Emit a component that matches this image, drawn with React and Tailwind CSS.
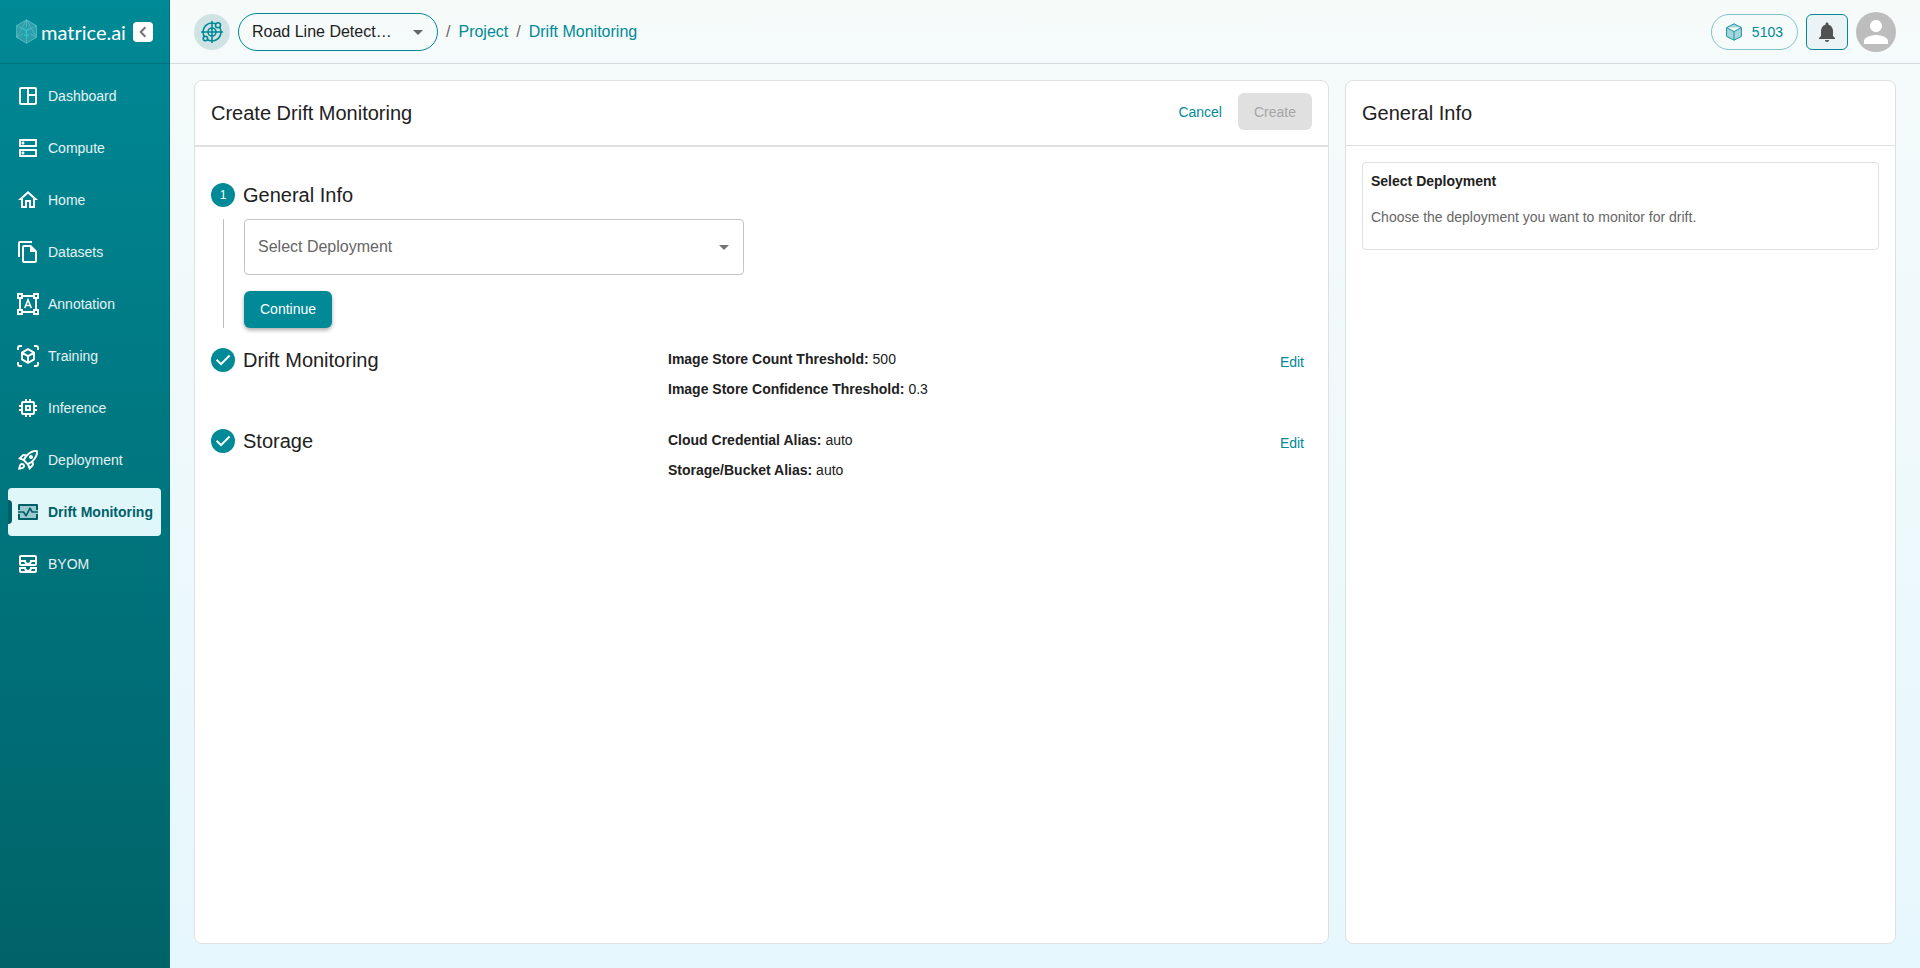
import {
  MdOutlineSpaceDashboard,
  MdOutlineDns,
  MdOutlineHome,
  MdOutlineFileCopy,
  MdOutlineMemory,
  MdOutlineRocketLaunch,
  MdOutlineAllInbox,
  MdArrowDropDown,
  MdNotifications,
  MdPerson,
} from "react-icons/md";

function AnnotationIcon() {
  return (
    <svg className="size-6" viewBox="0 0 24 24" fill="none" stroke="currentColor" strokeWidth="2">
      <path d="M2 2h4v4H2zM18 2h4v4h-4zM2 18h4v4H2zM18 18h4v4h-4z" />
      <path d="M6 4h12M6 20h12M4 6v12M20 6v12" />
      <path d="M8.7 16 12 7.8 15.3 16M9.8 13.5h4.4" strokeWidth="1.6" />
    </svg>
  );
}

function TrainingIcon() {
  return (
    <svg className="size-6" viewBox="0 0 24 24" fill="none" stroke="currentColor" strokeWidth="2">
      <path d="M2 6V4a2 2 0 0 1 2-2h2M18 2h2a2 2 0 0 1 2 2v2M22 18v2a2 2 0 0 1-2 2h-2M6 22H4a2 2 0 0 1-2-2v-2" />
      <path d="M12 5.2 18 8.6v6.8l-6 3.4-6-3.4V8.6zM6.2 8.8 12 12.1l5.8-3.3M12 12.1v6.5" strokeLinejoin="round" />
    </svg>
  );
}

function DriftIcon() {
  return (
    <svg className="size-6" viewBox="0 0 24 24" fill="none" stroke="currentColor" strokeWidth="2">
      <rect x="2" y="4" width="20" height="16" rx="1.5" fill="currentColor" fillOpacity="0.3" stroke="none" />
      <path d="M3 10V5h18v5M3 14v5h18v-5" strokeLinejoin="round" />
      <path d="M2 12h5.6L10 15.8 14 8.2l2.2 3.8H22" strokeWidth="1.7" strokeLinejoin="round" />
    </svg>
  );
}

function ChevronIcon() {
  return (
    <svg className="size-5" viewBox="0 0 20 20" fill="none" stroke="currentColor" strokeWidth="2">
      <path d="M12.3 5.3 7.8 10l4.5 4.7" />
    </svg>
  );
}

function CheckIcon() {
  return (
    <svg className="size-6" viewBox="0 0 24 24" fill="none" stroke="currentColor" strokeWidth="2">
      <path d="M5.6 11.8 10 16.2l8.6-8.7" />
    </svg>
  );
}

function Logo() {
  return (
    <div className="flex items-center gap-1">
      <svg className="h-[25px] w-[21px]" viewBox="0 0 21 25" fill="none" stroke="#7cd0d6" strokeWidth="0.6">
        <path d="M10.5.8 20.4 6.6v11.8l-9.9 5.8-9.9-5.8V6.6z" fill="#5fbcc4" fillOpacity="0.45" />
        <path d="M10.5.8v7.7M.6 6.6l9.9 5.4 9.9-5.4M.6 18.4 7 14.8M20.4 18.4 14 14.8M10.5 12v12.2M.6 18.4 10.5.8l9.9 17.6" strokeOpacity="0.7" />
        <path d="m7.5 9.5 3 2.5 3-2.5M10.5 12v4M8 15.5l2.5 2 2.5-2" stroke="#2fd0dc" strokeWidth="1" />
      </svg>
      <span className="font-[Lato,sans-serif] text-xl leading-6 text-white">matrice.ai</span>
    </div>
  );
}

function ProjectIcon() {
  return (
    <svg className="size-[22px]" viewBox="0 0 22 22" fill="none" stroke="currentColor" strokeWidth="1.6">
      <circle cx="11" cy="11" r="9" />
      <circle cx="11" cy="11" r="4" />
      <path d="M11 0v22M0 11h22" />
      <circle cx="17" cy="4.2" r="2.5" fill="#d0e3e4" />
      <circle cx="4.4" cy="17.6" r="2.2" fill="#d0e3e4" />
    </svg>
  );
}

function CubeIcon() {
  return (
    <svg className="h-[18px] w-4" viewBox="0 0 16 18" fill="#a3d5da" stroke="#1f97a2" strokeLinejoin="round">
      <path d="M8 .8 15.4 4.6v8.8L8 17.2.6 13.4V4.6zM.6 4.6 8 8.6l7.4-4M8 8.6v8.6" />
    </svg>
  );
}

const navItems = [
  { label: "Dashboard", icon: MdOutlineSpaceDashboard },
  { label: "Compute", icon: MdOutlineDns },
  { label: "Home", icon: MdOutlineHome },
  { label: "Datasets", icon: MdOutlineFileCopy },
  { label: "Annotation", icon: AnnotationIcon },
  { label: "Training", icon: TrainingIcon },
  { label: "Inference", icon: MdOutlineMemory },
  { label: "Deployment", icon: MdOutlineRocketLaunch },
  { label: "Drift Monitoring", icon: DriftIcon, active: true },
  { label: "BYOM", icon: MdOutlineAllInbox },
];

const steps = [
  {
    title: "Drift Monitoring",
    rows: [
      ["Image Store Count Threshold", "500"],
      ["Image Store Confidence Threshold", "0.3"],
    ],
  },
  {
    title: "Storage",
    rows: [
      ["Cloud Credential Alias", "auto"],
      ["Storage/Bucket Alias", "auto"],
    ],
  },
];

function Sidebar() {
  return (
    <aside className="flex w-[170px] shrink-0 flex-col border-r border-[#006f79] bg-linear-to-b from-[#008996] to-[#006368]">
      <div className="flex h-16 shrink-0 items-center justify-between border-b border-black/15 px-4">
        <Logo />
        <button type="button" aria-label="Collapse menu" className="flex size-5 items-center justify-center rounded bg-white text-neutral-500">
          <ChevronIcon />
        </button>
      </div>
      <nav className="flex flex-col gap-1 p-2">
        {navItems.map(({ label, icon: Icon, active }) => (
          <a
            key={label}
            href="#"
            className={
              active
                ? "relative flex h-12 items-center gap-2 rounded bg-[#e0f7fa] pl-2 text-sm font-bold whitespace-nowrap text-[#006069]"
                : "flex h-12 items-center gap-2 rounded pl-2 text-sm text-white/90"
            }
          >
            {active ? <span className="absolute top-3 left-0 h-6 w-1 rounded-r bg-[#006069]" /> : null}
            <span className={active ? "shrink-0" : "shrink-0 text-white"}>
              <Icon className="size-6" />
            </span>
            {label}
          </a>
        ))}
      </nav>
    </aside>
  );
}

function Header() {
  return (
    <header className="flex h-16 shrink-0 items-center border-b border-[#d5dcde] px-6">
      <div className="flex size-9 items-center justify-center rounded-full bg-[#d0e3e4] text-[#008996]">
        <ProjectIcon />
      </div>
      <div className="relative ml-2 w-[200px]">
        <select aria-label="Project" className="h-[38px] w-full appearance-none rounded-full border border-[#008996] pr-10 pl-[13px] text-base text-ellipsis text-[#212121]">
          <option>Road Line Detect…</option>
        </select>
        <MdArrowDropDown className="pointer-events-none absolute top-[7px] right-2 size-6 text-[#666]" />
      </div>
      <nav className="ml-2 flex gap-2 pt-px text-base text-[#666]">
        <span>/</span>
        <a href="#" className="text-[#008996]">Project</a>
        <span>/</span>
        <a href="#" className="text-[#008996]">Drift Monitoring</a>
      </nav>
      <div className="ml-auto flex items-center gap-2">
        <button type="button" className="flex h-9 items-center gap-[10px] rounded-full border border-[#80c4ca] px-[14px] text-sm text-[#008996]">
          <CubeIcon />
          5103
        </button>
        <button type="button" aria-label="Notifications" className="flex h-9 w-[42px] items-center justify-center rounded-md border border-[#008996] bg-[#ebf3f6] text-neutral-600">
          <MdNotifications className="size-6" />
        </button>
        <button type="button" aria-label="Account" className="flex size-10 items-center justify-center rounded-full bg-[#bdbdbd] text-white">
          <MdPerson className="size-9" />
        </button>
      </div>
    </header>
  );
}

function CreatePanel() {
  return (
    <section className="min-w-0 flex-1 rounded-lg border border-[#e0e0e0] bg-white">
      <div className="flex h-[66px] items-center justify-between border-b-2 border-[#e0e0e0] px-4">
        <h1 className="text-xl text-[#212121]">Create Drift Monitoring</h1>
        <div className="flex items-center gap-4 pb-[3px] text-sm">
          <button type="button" className="text-[#008996]">Cancel</button>
          <button type="button" disabled className="h-[37px] rounded-md bg-[#e0e0e0] px-4 text-[#a6a6a6]">Create</button>
        </div>
      </div>

      <div className="px-4 pt-8">
        <div className="flex h-8 items-center gap-2">
          <span className="flex size-6 items-center justify-center rounded-full bg-[#008996] text-xs text-white">1</span>
          <h2 className="text-xl text-[#212121]">General Info</h2>
        </div>
        <div className="mt-2 ml-3 border-l border-[#bdbdbd] pl-5">
          <div className="relative w-[500px]">
            <select aria-label="Select Deployment" className="h-14 w-full appearance-none rounded border border-[#c4c4c4] bg-white px-[13px] text-base text-[#666]">
              <option>Select Deployment</option>
            </select>
            <MdArrowDropDown className="pointer-events-none absolute top-4 right-2 size-6 text-[#757575]" />
          </div>
          <button type="button" className="mt-4 block h-[37px] rounded-md bg-[#008996] px-4 pb-px text-sm text-white shadow-[0_2px_4px_rgba(0,0,0,0.35)]">
            Continue
          </button>
        </div>

        {steps.map((step) => (
          <div key={step.title} className="mt-4 flex h-[65px] items-start">
            <div className="flex h-8 w-[457px] items-center gap-2">
              <span className="flex size-6 items-center justify-center rounded-full bg-[#008996] text-white">
                <CheckIcon />
              </span>
              <h2 className="text-xl text-[#212121]">{step.title}</h2>
            </div>
            <div className="flex flex-1 flex-col gap-[10px] pt-[5px] text-sm text-[#212121]">
              {step.rows.map(([name, value]) => (
                <p key={name}>
                  <b>{name}:</b> {value}
                </p>
              ))}
            </div>
            <button type="button" className="px-2 pt-2 text-sm text-[#008996]">Edit</button>
          </div>
        ))}
      </div>
    </section>
  );
}

function InfoPanel() {
  return (
    <aside className="w-[551px] shrink-0 rounded-lg border border-[#e0e0e0] bg-white">
      <h2 className="flex h-[65px] items-center border-b border-[#e0e0e0] px-4 text-xl text-[#212121]">General Info</h2>
      <div className="m-4 rounded border border-[#e0e0e0] px-2 pt-2 pb-[22px] text-sm">
        <p className="font-bold text-[#212121]">Select Deployment</p>
        <p className="mt-4 text-[#666]">Choose the deployment you want to monitor for drift.</p>
      </div>
    </aside>
  );
}

export default function App() {
  return (
    <div className="flex min-h-screen bg-linear-to-b from-[#f6fbfa] to-[#e6f7fd] font-['Liberation_Sans',Arial,sans-serif]">
      <Sidebar />
      <div className="flex min-w-0 flex-1 flex-col">
        <Header />
        <main className="flex flex-1 gap-4 px-6 pt-4 pb-6">
          <CreatePanel />
          <InfoPanel />
        </main>
      </div>
    </div>
  );
}
